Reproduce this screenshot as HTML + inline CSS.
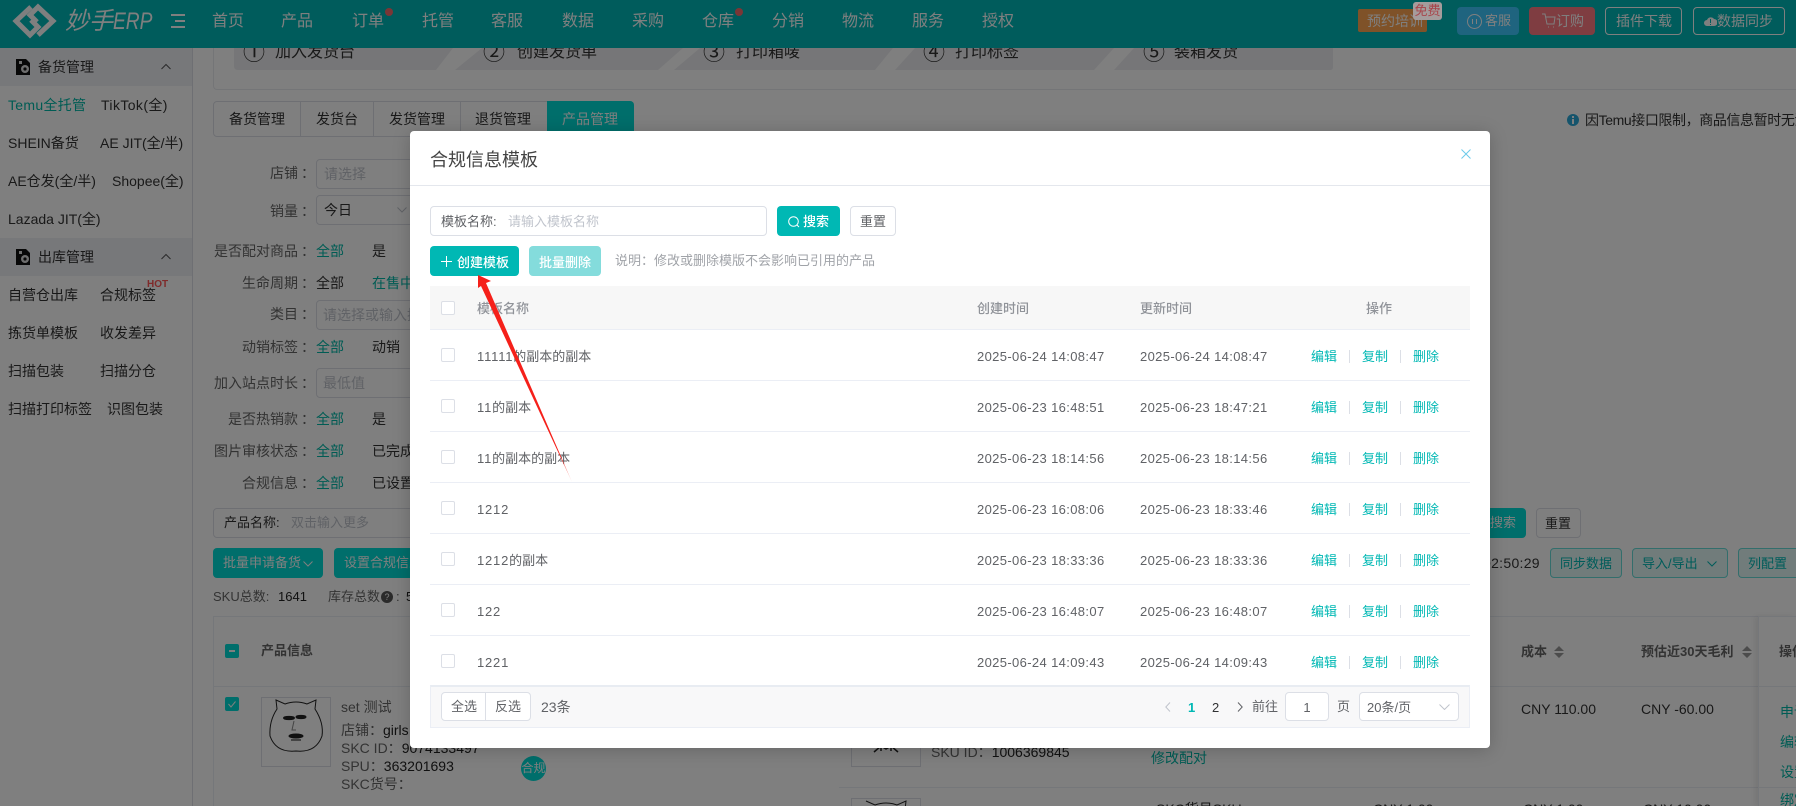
<!DOCTYPE html>
<html lang="zh"><head><meta charset="utf-8"><title>合规信息模板</title>
<style>
*{box-sizing:border-box}
html,body{margin:0;padding:0;width:1796px;height:806px;overflow:hidden;background:#fff}
body{position:relative;font:14px/20px "Liberation Sans","Noto Sans CJK SC",sans-serif;color:#333}
#w{position:absolute;left:0;top:0;width:1796px;height:806px;overflow:hidden}
.t{position:absolute;white-space:nowrap;line-height:20px}
.b{position:absolute;border-radius:4px}
svg{position:absolute;overflow:hidden}
.g{color:#666}.c{color:#00b8b4}.p{color:#c0c4cc}
.nav{position:absolute;top:11px;font-size:16px;line-height:22px;color:#fff;white-space:nowrap}
.inp{position:absolute;left:316px;width:110px;height:30px;border:1px solid #dcdfe6;border-radius:4px;background:#fff}
.r{position:absolute;left:430px;width:1040px;height:51px;border-bottom:1px solid #ebeef5;font-size:13px;color:#606266}
.r .t{top:17px}
.r .k{position:absolute;left:11px;top:18px;width:14px;height:14px;border:1px solid #dcdfe6;border-radius:2px;background:#fff}
.r .s{position:absolute;top:20px;width:1px;height:13px;background:#dcdfe6}
.d{letter-spacing:.36px}
.n{letter-spacing:.8px}
.cut{height:7px;overflow:hidden}
#ov{position:absolute;left:0;top:0;width:1796px;height:806px;background:rgba(0,0,0,.5)}
</style></head><body><div id="w">

<!-- page background -->
<div style="position:absolute;left:0;top:0;width:1796px;height:48px;background:#00b8b8"></div>
<svg style="left:0;top:0" width="200" height="48" viewBox="0 0 200 48" fill="none" stroke="#fff" stroke-width="5">
<path d="M31 7L16 21L30 35L38 27L31 20"/><path d="M38 35L53 21L38 7L30 15L37 22"/>
<path stroke-width="2" d="M171 15H185M175 21H185M171 27H185"/></svg>
<div class="t" style="left:65px;top:10px;font-size:24px;line-height:24px;font-style:italic;color:#fff">妙手<span style="display:inline-block;width:39px;transform:scaleX(.8);transform-origin:left">ERP</span></div>
<span class="nav" style="left:212px">首页</span><span class="nav" style="left:281px">产品</span><span class="nav" style="left:352px">订单</span><span class="nav" style="left:422px">托管</span><span class="nav" style="left:491px">客服</span><span class="nav" style="left:562px">数据</span><span class="nav" style="left:632px">采购</span><span class="nav" style="left:702px">仓库</span><span class="nav" style="left:772px">分销</span><span class="nav" style="left:842px">物流</span><span class="nav" style="left:912px">服务</span><span class="nav" style="left:982px">授权</span>
<div class="b" style="left:385px;top:8px;width:8px;height:8px;border-radius:50%;background:#f56c6c"></div>
<div class="b" style="left:735px;top:8px;width:8px;height:8px;border-radius:50%;background:#f56c6c"></div>
<div class="b" style="left:1358px;top:9px;width:69px;height:23px;background:#ffa550;border-radius:2px"></div>
<div class="t" style="left:1367px;top:11px;color:#fff">预约培训</div>
<div class="b" style="left:1457px;top:7px;width:62px;height:28px;background:#3ec8ff"></div>
<svg style="left:1467px;top:14px" width="15" height="15" fill="none" stroke="#fff"><circle cx="7.5" cy="7.5" r="7"/><path d="M5.5 5V10M9.5 5V10"/></svg>
<div class="t" style="left:1485px;top:11px;font-size:13px;color:#fff">客服</div>
<div class="b" style="left:1529px;top:7px;width:66px;height:28px;background:#ff7a82"></div>
<svg style="left:1542px;top:13px" width="14" height="16" fill="none" stroke="#fff"><path d="M0 1H3L5 11H12L13 4H4M6 14H7M11 14H12"/></svg>
<div class="t" style="left:1556px;top:11px;color:#fff">订购</div>
<div class="b" style="left:1605px;top:7px;width:77px;height:28px;border:1px solid #fff"></div>
<div class="t" style="left:1616px;top:11px;color:#fff">插件下载</div>
<div class="b" style="left:1693px;top:7px;width:92px;height:28px;border:1px solid #fff"></div>
<svg style="left:1704px;top:15px" width="13" height="12"><path fill="#fff" d="M3 11A3 3 0 0 1 3 5A4 4 0 0 1 10 4A3.5 3.5 0 0 1 10 11Z"/><path stroke="#00b8b8" d="M6.500 4V8M6.500 9V10"/></svg>
<div class="t" style="left:1717px;top:11px;color:#fff">数据同步</div>

<!-- sidebar -->
<div style="position:absolute;left:192px;top:48px;width:1px;height:758px;background:#dcdfe6"></div>
<div style="position:absolute;left:0;top:48px;width:192px;height:38px;background:#eef0f4"></div>
<div style="position:absolute;left:0;top:238px;width:192px;height:38px;background:#eef0f4"></div>
<svg style="left:16px;top:59px" width="15" height="16"><path fill="#111" d="M0 0H10L14 4V16H0Z"/><circle cx="9" cy="10" r="4" fill="#ddd"/><circle cx="9" cy="10" r="1.600" fill="#111"/><rect x="3" y="2" width="3" height="3" fill="#ddd"/></svg>
<svg style="left:16px;top:249px" width="15" height="16"><path fill="#111" d="M0 0H10L14 4V16H0Z"/><circle cx="9" cy="10" r="4" fill="#ddd"/><circle cx="9" cy="10" r="1.600" fill="#111"/><rect x="3" y="2" width="3" height="3" fill="#ddd"/></svg>
<div class="t" style="left:38px;top:57px">备货管理</div><div class="t" style="left:38px;top:247px">出库管理</div>
<svg style="left:161px;top:63px" width="10" height="7" fill="none" stroke="#555"><path d="M.5 6L5 1.500L9.500 6"/></svg>
<svg style="left:161px;top:253px" width="10" height="7" fill="none" stroke="#555"><path d="M.5 6L5 1.500L9.500 6"/></svg>
<div class="t c" style="left:8px;top:95px;color:#00b8a8;letter-spacing:.3px">Temu全托管</div><div class="t" style="left:101px;top:95px;letter-spacing:.4px">TikTok(全)</div>
<div class="t" style="left:8px;top:133px">SHEIN备货</div><div class="t" style="left:100px;top:133px">AE JIT(全/半)</div>
<div class="t" style="left:8px;top:171px">AE仓发(全/半)</div><div class="t" style="left:112px;top:171px">Shopee(全)</div>
<div class="t" style="left:8px;top:209px">Lazada JIT(全)</div>
<div class="t" style="left:8px;top:285px">自营仓出库</div><div class="t" style="left:100px;top:285px">合规标签</div>
<div class="t" style="left:147px;top:279px;font-size:10px;line-height:12px;font-weight:bold;color:#f55">HOT</div>
<div class="t" style="left:8px;top:323px">拣货单模板</div><div class="t" style="left:100px;top:323px">收发差异</div>
<div class="t" style="left:8px;top:361px">扫描包装</div><div class="t" style="left:100px;top:361px">扫描分仓</div>
<div class="t" style="left:8px;top:399px">扫描打印标签</div><div class="t" style="left:107px;top:399px">识图包装</div>

<!-- steps -->
<div style="position:absolute;left:213px;top:48px;width:1583px;height:42px;border:1px solid #e8eaee;border-width:0 0 1px 1px;border-radius:0 0 0 4px"></div>
<svg style="left:0;top:0" width="1796" height="90" fill="#ecedf0">
<path d="M234 48H453L436 70H238Q234 70 234 66Z"/><path d="M482 48H683L658 70H455Z"/><path d="M700 48H893L875 70H674Z"/><path d="M915 48H1114L1094 70H895Z"/><path d="M1134 48H1333V67Q1333 70 1330 70H1114Z"/></svg>
<div style="position:absolute;left:0;top:48px;width:1796px;height:30px;overflow:hidden">
<div class="t" style="left:243px;top:-5px;font-size:22px">①</div><div class="t" style="left:275px;top:-5px;font-size:16px">加入发货台</div>
<div class="t" style="left:483px;top:-5px;font-size:22px">②</div><div class="t" style="left:517px;top:-5px;font-size:16px">创建发货单</div>
<div class="t" style="left:703px;top:-5px;font-size:22px">③</div><div class="t" style="left:736px;top:-5px;font-size:16px">打印箱唛</div>
<div class="t" style="left:923px;top:-5px;font-size:22px">④</div><div class="t" style="left:955px;top:-5px;font-size:16px">打印标签</div>
<div class="t" style="left:1143px;top:-5px;font-size:22px">⑤</div><div class="t" style="left:1174px;top:-5px;font-size:16px">装箱发货</div>
</div>

<!-- tabs -->
<div class="b" style="left:213px;top:101px;width:421px;height:36px;border:1px solid #dcdfe6"></div>
<div class="b" style="left:547px;top:101px;width:87px;height:36px;background:#00dcd6;border-radius:0 4px 4px 0"></div>
<div style="position:absolute;left:300px;top:101px;width:1px;height:36px;background:#dcdfe6"></div><div style="position:absolute;left:373px;top:101px;width:1px;height:36px;background:#dcdfe6"></div><div style="position:absolute;left:460px;top:101px;width:1px;height:36px;background:#dcdfe6"></div>
<div class="t" style="left:229px;top:109px">备货管理</div><div class="t" style="left:316px;top:109px">发货台</div><div class="t" style="left:389px;top:109px">发货管理</div><div class="t" style="left:475px;top:109px">退货管理</div><div class="t" style="left:562px;top:109px;color:#fff">产品管理</div>
<svg style="left:1567px;top:114px" width="12" height="12"><circle cx="6" cy="6" r="6" fill="#2aa8d8"/><rect x="5" y="5" width="2" height="5" fill="#fff"/><rect x="5" y="2" width="2" height="2" fill="#fff"/></svg>
<div class="t" style="left:1585px;top:110px;width:211px;overflow:hidden;letter-spacing:-.4px">因Temu接口限制，商品信息暂时无法同步</div>

<!-- filters -->
<div class="inp" style="top:159px"></div><div class="inp" style="top:195px"></div><div class="inp" style="top:300px"></div><div class="inp" style="top:368px"></div>
<div class="t g" style="left:270px;top:163px">店铺</div><div class="t g" style="left:301px;top:163px">：</div><div class="t p" style="left:324px;top:164px">请选择</div>
<div class="t g" style="left:270px;top:201px">销量</div><div class="t g" style="left:301px;top:201px">：</div><div class="t" style="left:324px;top:200px">今日</div>
<svg style="left:397px;top:207px" width="10" height="6" fill="none" stroke="#c0c4cc"><path d="M.5.500L5 5L9.500.500"/></svg>
<div class="t g" style="left:214px;top:241px">是否配对商品</div><div class="t g" style="left:301px;top:241px">：</div><div class="t" style="left:316px;top:241px;color:#00b8a8">全部</div><div class="t" style="left:372px;top:241px">是</div>
<div class="t g" style="left:242px;top:273px">生命周期</div><div class="t g" style="left:301px;top:273px">：</div><div class="t" style="left:316px;top:273px">全部</div><div class="t" style="left:372px;top:273px;color:#00b8a8">在售中</div>
<div class="t g" style="left:270px;top:304px">类目</div><div class="t g" style="left:301px;top:304px">：</div><div class="t p" style="left:323px;top:305px">请选择或输入搜索</div>
<div class="t g" style="left:242px;top:337px">动销标签</div><div class="t g" style="left:301px;top:337px">：</div><div class="t" style="left:316px;top:337px;color:#00b8a8">全部</div><div class="t" style="left:372px;top:337px">动销</div>
<div class="t g" style="left:214px;top:373px">加入站点时长</div><div class="t g" style="left:301px;top:373px">：</div><div class="t p" style="left:323px;top:373px">最低值</div>
<div class="t g" style="left:228px;top:409px">是否热销款</div><div class="t g" style="left:301px;top:409px">：</div><div class="t" style="left:316px;top:409px;color:#00b8a8">全部</div><div class="t" style="left:372px;top:409px">是</div>
<div class="t g" style="left:214px;top:441px">图片审核状态</div><div class="t g" style="left:301px;top:441px">：</div><div class="t" style="left:316px;top:441px;color:#00b8a8">全部</div><div class="t" style="left:372px;top:441px">已完成</div>
<div class="t g" style="left:242px;top:473px">合规信息</div><div class="t g" style="left:301px;top:473px">：</div><div class="t" style="left:316px;top:473px;color:#00b8a8">全部</div><div class="t" style="left:372px;top:473px">已设置</div>
<div class="b" style="left:213px;top:508px;width:400px;height:30px;border:1px solid #dcdfe6"></div>
<div class="t" style="left:224px;top:513px;font-size:13px">产品名称:</div><div class="t p" style="left:291px;top:513px;font-size:13px">双击输入更多</div>
<div class="b" style="left:213px;top:548px;width:110px;height:30px;background:#00dcd6"></div>
<div class="t" style="left:223px;top:553px;font-size:13px;color:#fff">批量申请备货</div>
<svg style="left:303px;top:561px" width="10" height="6" fill="none" stroke="#fff"><path d="M.5.500L5 5L9.500.500"/></svg>
<div class="b" style="left:334px;top:548px;width:140px;height:30px;background:#00dcd6"></div>
<div class="t" style="left:344px;top:553px;font-size:13px;color:#fff">设置合规信息</div>
<div class="t g" style="left:213px;top:587px;font-size:13px">SKU总数:</div><div class="t" style="left:278px;top:587px;font-size:13px;color:#222">1641</div>
<div class="t g" style="left:328px;top:587px;font-size:13px">库存总数</div>
<div class="b" style="left:381px;top:591px;width:12px;height:12px;border-radius:50%;background:#555;color:#fff;font-size:9px;line-height:12px;text-align:center">?</div>
<div class="t g" style="left:396px;top:587px;font-size:13px">:</div><div class="t" style="left:406px;top:587px;font-size:13px;color:#222">5</div>
<div class="b" style="left:1400px;top:508px;width:126px;height:30px;background:#00dcd6"></div>
<div class="t" style="left:1490px;top:513px;font-size:13px;color:#fff">搜索</div>
<div class="b" style="left:1536px;top:508px;width:45px;height:30px;border:1px solid #dcdfe6"></div>
<div class="t" style="left:1545px;top:514px;font-size:13px">重置</div>
<div class="t" style="left:1483px;top:553px;letter-spacing:.3px">02:50:29</div>
<div class="b" style="left:1550px;top:548px;width:72px;height:30px;border:1px solid #66ddd8;background:#e2f8f7"></div>
<div class="t" style="left:1560px;top:554px;font-size:13px;color:#00b8b4">同步数据</div>
<div class="b" style="left:1632px;top:548px;width:96px;height:30px;border:1px solid #66ddd8;background:#e2f8f7"></div>
<div class="t" style="left:1642px;top:554px;font-size:13px;color:#00b8b4">导入/导出</div>
<svg style="left:1707px;top:561px" width="10" height="6" fill="none" stroke="#00b8b4"><path d="M.5.500L5 5L9.500.500"/></svg>
<div class="b" style="left:1738px;top:548px;width:58px;height:30px;border:1px solid #66ddd8;border-right:0;border-radius:4px 0 0 4px;background:#e2f8f7"></div>
<div class="t" style="left:1748px;top:554px;font-size:13px;color:#00b8b4">列配置</div>

<!-- product table -->
<div style="position:absolute;left:213px;top:616px;width:1583px;height:190px;border:1px solid #ebeef5;border-width:1px 0 0 1px"></div>
<div style="position:absolute;left:213px;top:686px;width:1583px;height:1px;background:#ebeef5"></div>
<div style="position:absolute;left:839px;top:787px;width:957px;height:1px;background:#ebeef5"></div>
<div style="position:absolute;left:1758px;top:616px;width:38px;height:190px;box-shadow:-3px 0 6px rgba(0,0,0,.08);border-left:1px solid #ebeef5"></div>
<div class="b" style="left:225px;top:644px;width:14px;height:14px;background:#00dcd6;border-radius:2px"></div><div style="position:absolute;left:229px;top:650px;width:6px;height:2px;background:#fff"></div>
<div class="t" style="left:261px;top:641px;font-size:13px;font-weight:bold;color:#666">产品信息</div>
<div class="b" style="left:225px;top:697px;width:14px;height:14px;background:#00dcd6;border-radius:2px"></div>
<svg style="left:225px;top:697px" width="14" height="14" fill="none" stroke="#fff"><path d="M3.500 7L6 10L10.500 4.500"/></svg>
<div style="position:absolute;left:261px;top:697px;width:70px;height:70px;border:1px solid #dcdfe6;background:#fff"></div>
<svg style="left:261px;top:697px" width="70" height="70" fill="none" stroke="#222"><path d="M15 3L24 7Q35 3 46 7L55 3L54 12Q63 26 61 39Q55 56 35 54Q15 56 9 39Q8 24 16 12Z"/><ellipse cx="28" cy="21" rx="5.500" ry="1.600" fill="#222"/><ellipse cx="40" cy="20" rx="5" ry="1.600" fill="#222"/><path d="M33 24L31 33H35" stroke="#888"/><ellipse cx="35" cy="39" rx="7" ry="2" fill="#222"/><path d="M30 43H40" stroke="#888" stroke-width="2"/></svg>
<div class="t g" style="left:341px;top:697px">set 测试</div>
<div class="t g" style="left:341px;top:720px">店铺：<span style="color:#222">girls</span></div>
<div class="t g" style="left:341px;top:738px">SKC ID：<span style="color:#222">9074133497</span></div>
<div class="t g" style="left:341px;top:756px">SPU：<span style="color:#222">363201693</span></div>
<div class="t g" style="left:341px;top:774px">SKC货号：</div>
<div class="b" style="left:521px;top:756px;width:25px;height:25px;border-radius:50%;background:#00dcd6;color:#fff;font-size:12px;line-height:25px;text-align:center;white-space:nowrap;overflow:hidden">合规</div>
<div style="position:absolute;left:851px;top:697px;width:70px;height:70px;border:1px solid #dcdfe6;background:#fff"></div>
<svg style="left:851px;top:740px" width="70" height="20" fill="none" stroke="#222" stroke-width="1.500"><path d="M23 12L30 6L35 9L40 6L47 12M30 6V11M40 6V11"/></svg>
<div class="t g" style="left:931px;top:742px">SKU ID：<span style="color:#222">1006369845</span></div>
<div class="t" style="left:1151px;top:748px;color:#00b8a8">修改配对</div>
<div style="position:absolute;left:851px;top:798px;width:70px;height:8px;border:1px solid #dcdfe6;border-bottom:0;background:#fff"></div>
<svg style="left:851px;top:798px" width="70" height="8" fill="none" stroke="#222"><path d="M15 3L24 7Q35 3 46 7L55 3L54 12"/></svg>
<div class="t cut" style="left:1156px;top:799px">SKC货号SKU</div><div class="t cut" style="left:1373px;top:799px">CNY 1.00</div>
<div class="t g" style="left:1521px;top:642px;font-size:13px;font-weight:bold">成本</div>
<svg style="left:1554px;top:646px" width="10" height="12" fill="#999"><path d="M5 0L10 5H0ZM0 7H10L5 12Z"/></svg>
<div class="t g" style="left:1641px;top:642px;font-size:13px;font-weight:bold">预估近30天毛利</div>
<svg style="left:1742px;top:646px" width="10" height="12" fill="#999"><path d="M5 0L10 5H0ZM0 7H10L5 12Z"/></svg>
<div class="t g" style="left:1779px;top:642px;font-size:13px;font-weight:bold;width:17px;overflow:hidden">操作</div>
<div class="t" style="left:1521px;top:699px">CNY 110.00</div><div class="t" style="left:1641px;top:699px">CNY -60.00</div>
<div class="t cut" style="left:1523px;top:799px">CNY 1.00</div><div class="t cut" style="left:1643px;top:799px">CNY 10.00</div>
<div class="t" style="left:1780px;top:702px;width:16px;overflow:hidden;color:#00b8a8">申请备货</div><div class="t" style="left:1780px;top:732px;width:16px;overflow:hidden;color:#00b8a8">编辑</div><div class="t" style="left:1780px;top:762px;width:16px;overflow:hidden;color:#00b8a8">设置</div><div class="t" style="left:1780px;top:790px;width:16px;height:16px;overflow:hidden;color:#00b8a8">绑定</div>

<div id="ov"></div>
<div class="t" style="left:1413px;top:2px;width:29px;height:18px;line-height:18px;background:#a59c9c;border-radius:3px;font-size:13px;color:#a8444a;text-align:center;overflow:hidden">免费</div>

<!-- modal -->
<div class="b" style="left:410px;top:131px;width:1080px;height:617px;background:#fff;box-shadow:0 2px 18px rgba(0,0,0,.2)"></div>
<div class="t" style="left:430px;top:148px;font-size:18px;line-height:24px;color:#444">合规信息模板</div>
<svg style="left:1461px;top:149px" width="10" height="10" stroke="#6ccbea" fill="none"><path d="M.5.500L9.500 9.500M9.500.500L.5 9.500"/></svg>
<div style="position:absolute;left:410px;top:185px;width:1080px;height:1px;background:#e4e7ed"></div>
<div class="b" style="left:430px;top:206px;width:337px;height:30px;border:1px solid #dcdfe6"></div>
<div class="t" style="left:441px;top:212px;font-size:13px;color:#606266">模板名称:</div>
<div class="t p" style="left:508px;top:212px;font-size:13px">请输入模板名称</div>
<div class="b" style="left:777px;top:206px;width:63px;height:30px;background:#00b8b4"></div>
<svg style="left:788px;top:216px" width="12" height="12" fill="none" stroke="#fff"><circle cx="5.500" cy="5.500" r="4.800"/><path d="M9 9L11 11"/></svg>
<div class="t" style="left:803px;top:212px;font-size:13px;font-weight:500;color:#fff">搜索</div>
<div class="b" style="left:850px;top:206px;width:46px;height:30px;border:1px solid #dcdfe6"></div>
<div class="t" style="left:860px;top:212px;font-size:13px;color:#606266">重置</div>
<div class="b" style="left:430px;top:246px;width:89px;height:30px;background:#00b8b4"></div>
<svg style="left:441px;top:256px" width="11" height="11" stroke="#fff"><path d="M5.500 0V11M0 5.500H11"/></svg>
<div class="t" style="left:457px;top:253px;font-size:13px;font-weight:500;color:#fff">创建模板</div>
<div class="b" style="left:529px;top:246px;width:72px;height:30px;background:#84dcdc"></div>
<div class="t" style="left:539px;top:253px;font-size:13px;font-weight:500;color:#fff">批量删除</div>
<div class="t" style="left:615px;top:251px;font-size:13px;color:#a0a3a8">说明：修改或删除模版不会影响已引用的产品</div>

<div style="position:absolute;left:430px;top:286px;width:1040px;height:44px;background:#f7f7f7;border-bottom:1px solid #ebeef5;font-size:13px;font-weight:500;color:#909399">
<div style="position:absolute;left:11px;top:15px;width:14px;height:14px;border:1px solid #dcdfe6;border-radius:2px;background:#fff"></div>
<div class="t" style="left:47px;top:13px">模板名称</div><div class="t" style="left:547px;top:13px">创建时间</div><div class="t" style="left:710px;top:13px">更新时间</div><div class="t" style="left:936px;top:13px">操作</div></div>

<div class="r" style="top:330px"><div class="k"></div><div class="t" style="left:47px"><span class="n">11111</span>的副本的副本</div><div class="t d" style="left:547px">2025-06-24 14:08:47</div><div class="t d" style="left:710px">2025-06-24 14:08:47</div><div class="t c" style="left:881px">编辑</div><div class="s" style="left:919px"></div><div class="t c" style="left:932px">复制</div><div class="s" style="left:970px"></div><div class="t c" style="left:983px">删除</div></div>
<div class="r" style="top:381px"><div class="k"></div><div class="t" style="left:47px"><span class="n">11</span>的副本</div><div class="t d" style="left:547px">2025-06-23 16:48:51</div><div class="t d" style="left:710px">2025-06-23 18:47:21</div><div class="t c" style="left:881px">编辑</div><div class="s" style="left:919px"></div><div class="t c" style="left:932px">复制</div><div class="s" style="left:970px"></div><div class="t c" style="left:983px">删除</div></div>
<div class="r" style="top:432px"><div class="k"></div><div class="t" style="left:47px"><span class="n">11</span>的副本的副本</div><div class="t d" style="left:547px">2025-06-23 18:14:56</div><div class="t d" style="left:710px">2025-06-23 18:14:56</div><div class="t c" style="left:881px">编辑</div><div class="s" style="left:919px"></div><div class="t c" style="left:932px">复制</div><div class="s" style="left:970px"></div><div class="t c" style="left:983px">删除</div></div>
<div class="r" style="top:483px"><div class="k"></div><div class="t n" style="left:47px">1212</div><div class="t d" style="left:547px">2025-06-23 16:08:06</div><div class="t d" style="left:710px">2025-06-23 18:33:46</div><div class="t c" style="left:881px">编辑</div><div class="s" style="left:919px"></div><div class="t c" style="left:932px">复制</div><div class="s" style="left:970px"></div><div class="t c" style="left:983px">删除</div></div>
<div class="r" style="top:534px"><div class="k"></div><div class="t" style="left:47px"><span class="n">1212</span>的副本</div><div class="t d" style="left:547px">2025-06-23 18:33:36</div><div class="t d" style="left:710px">2025-06-23 18:33:36</div><div class="t c" style="left:881px">编辑</div><div class="s" style="left:919px"></div><div class="t c" style="left:932px">复制</div><div class="s" style="left:970px"></div><div class="t c" style="left:983px">删除</div></div>
<div class="r" style="top:585px"><div class="k"></div><div class="t n" style="left:47px">122</div><div class="t d" style="left:547px">2025-06-23 16:48:07</div><div class="t d" style="left:710px">2025-06-23 16:48:07</div><div class="t c" style="left:881px">编辑</div><div class="s" style="left:919px"></div><div class="t c" style="left:932px">复制</div><div class="s" style="left:970px"></div><div class="t c" style="left:983px">删除</div></div>
<div class="r" style="top:636px;height:49px;border:0"><div class="k"></div><div class="t n" style="left:47px">1221</div><div class="t d" style="left:547px">2025-06-24 14:09:43</div><div class="t d" style="left:710px">2025-06-24 14:09:43</div><div class="t c" style="left:881px">编辑</div><div class="s" style="left:919px"></div><div class="t c" style="left:932px">复制</div><div class="s" style="left:970px"></div><div class="t c" style="left:983px">删除</div></div>

<!-- modal footer -->
<div style="position:absolute;left:430px;top:685px;width:1040px;height:43px;background:#f8f8f9;border:1px solid #ebeef5;border-top:2px solid #e8ecf2"></div>
<div class="b" style="left:441px;top:692px;width:90px;height:29px;border:1px solid #dcdfe6;background:#fff"></div>
<div style="position:absolute;left:485px;top:692px;width:1px;height:29px;background:#dcdfe6"></div>
<div class="t" style="left:451px;top:697px;font-size:13px;color:#606266">全选</div><div class="t" style="left:495px;top:697px;font-size:13px;color:#606266">反选</div>
<div class="t" style="left:541px;top:697px;color:#606266">23条</div>
<svg style="left:1165px;top:702px" width="6" height="10" fill="none" stroke="#c0c4cc"><path d="M5 .5L.8 5L5 9.500"/></svg>
<div class="t" style="left:1188px;top:698px;font-size:13px;font-weight:bold;color:#00b8b4">1</div>
<div class="t" style="left:1212px;top:698px;font-size:13px;color:#303133">2</div>
<svg style="left:1237px;top:702px" width="6" height="10" fill="none" stroke="#606266"><path d="M1 .5L5.200 5L1 9.500"/></svg>
<div class="t" style="left:1252px;top:697px;font-size:13px;color:#606266">前往</div>
<div class="b" style="left:1285px;top:692px;width:44px;height:29px;border:1px solid #dcdfe6;background:#fff;font-size:13px;line-height:29px;text-align:center;color:#606266">1</div>
<div class="t" style="left:1337px;top:697px;font-size:13px;color:#606266">页</div>
<div class="b" style="left:1359px;top:692px;width:100px;height:29px;border:1px solid #dcdfe6;background:#fff"></div>
<div class="t" style="left:1367px;top:698px;font-size:13px;color:#606266">20条/页</div>
<svg style="left:1439px;top:704px" width="11" height="6" fill="none" stroke="#c0c4cc"><path d="M.5.500L5.500 5.500L10.500.500"/></svg>

<!-- arrow -->
<svg style="left:0;top:0" width="1796" height="806"><defs><linearGradient id="a" gradientUnits="userSpaceOnUse" x1="478" y1="275" x2="572" y2="482"><stop offset=".88" stop-color="#f5201a"/><stop offset="1" stop-color="#ffd0cc"/></linearGradient></defs>
<path fill="url(#a)" d="M478 275L491 281L486 283L572 482L481 286L478 288Z"/></svg>
</div></body></html>
